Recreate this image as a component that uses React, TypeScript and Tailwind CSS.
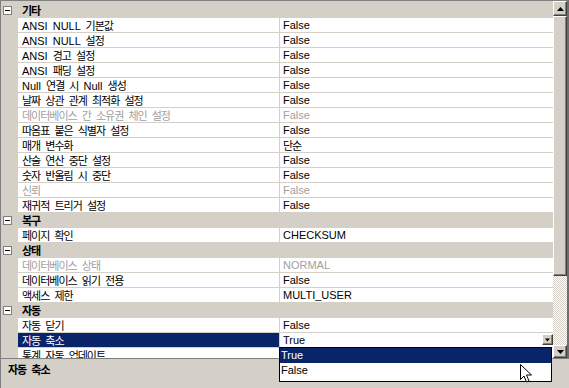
import React from "react";

type Row =
  | { kind: "cat"; label: string }
  | { kind: "item"; name: string; value: string; disabled?: boolean; selected?: boolean };

const rows: Row[] = [
  { kind: "cat", label: "기타" },
  { kind: "item", name: "ANSI NULL 기본값", value: "False" },
  { kind: "item", name: "ANSI NULL 설정", value: "False" },
  { kind: "item", name: "ANSI 경고 설정", value: "False" },
  { kind: "item", name: "ANSI 패딩 설정", value: "False" },
  { kind: "item", name: "Null 연결 시 Null 생성", value: "False" },
  { kind: "item", name: "날짜 상관 관계 최적화 설정", value: "False" },
  { kind: "item", name: "데이터베이스 간 소유권 체인 설정", value: "False", disabled: true },
  { kind: "item", name: "따옴표 붙은 식별자 설정", value: "False" },
  { kind: "item", name: "매개 변수화", value: "단순" },
  { kind: "item", name: "산술 연산 중단 설정", value: "False" },
  { kind: "item", name: "숫자 반올림 시 중단", value: "False" },
  { kind: "item", name: "신뢰", value: "False", disabled: true },
  { kind: "item", name: "재귀적 트리거 설정", value: "False" },
  { kind: "cat", label: "복구" },
  { kind: "item", name: "페이지 확인", value: "CHECKSUM" },
  { kind: "cat", label: "상태" },
  { kind: "item", name: "데이터베이스 상태", value: "NORMAL", disabled: true },
  { kind: "item", name: "데이터베이스 읽기 전용", value: "False" },
  { kind: "item", name: "액세스 제한", value: "MULTI_USER" },
  { kind: "cat", label: "자동" },
  { kind: "item", name: "자동 닫기", value: "False" },
  { kind: "item", name: "자동 축소", value: "True", selected: true },
  { kind: "item", name: "통계 자동 업데이트", value: "True" },
];

function T({ s }: { s: string }) {
  const parts = s.split(/([\uAC00-\uD7A3]+)/).filter((p) => p.length > 0);
  return (
    <span className="whitespace-pre">
      {parts.map((p, i) =>
        /[\uAC00-\uD7A3]/.test(p) ? (
          <span key={i} className="font-['Noto_Sans_CJK_KR',sans-serif] text-[11px] tracking-[-1px]">
            {p}
          </span>
        ) : (
          <span key={i} className="[word-spacing:2px]">{p}</span>
        )
      )}
    </span>
  );
}

function Expander() {
  return (
    <div className="w-[9px] h-[9px] border border-[#7f7f7f] bg-white flex items-center justify-center">
      <div className="w-[5px] h-px bg-black" />
    </div>
  );
}

function ArrowDown({ w = 7 }: { w?: number }) {
  return (
    <svg width={w} height={4} viewBox="0 0 7 4">
      <path d="M0 0 H7 L3.5 4 Z" fill="#000" />
    </svg>
  );
}

function Btn3D({ className, children }: { className?: string; children?: React.ReactNode }) {
  return (
    <div
      className={
        "bg-[#d4d0c8] border-t border-l border-t-white border-l-white border-b border-r border-b-[#404040] border-r-[#404040] shadow-[inset_-1px_-1px_#808080] flex items-center justify-center " +
        (className ?? "")
      }
    >
      {children}
    </div>
  );
}

export default function App() {
  return (
    <div className="relative w-[569px] h-[388px] overflow-hidden bg-[#d4d0c8] flex flex-col font-['Liberation_Sans','Noto_Sans_CJK_KR',sans-serif] text-[11px] text-black">
      {/* Grid area */}
      <div className="h-[358px] flex border-t border-l border-r-2 border-t-[#808080] border-l-[#808080] border-r-[#6e6e6e] overflow-hidden">
        <div className="flex-1 pt-[2px] overflow-hidden">
          {rows.map((r, i) =>
            r.kind === "cat" ? (
              <div key={i} className="h-[15px] flex items-center">
                <div className="w-[17px] flex items-center pl-[2px]">
                  <Expander />
                </div>
                <div className="pl-[4px] font-bold leading-[15px]">
                  <T s={r.label} />
                </div>
              </div>
            ) : (
              <div key={i} className="h-[15px] flex">
                <div className="w-[17px]" />
                <div
                  className={
                    "w-[262px] border-r border-b border-[#d4d0c8] pl-[4px] leading-[14px] overflow-hidden " +
                    (r.selected ? "bg-[#0a246a] text-white" : r.disabled ? "bg-white text-[#a0a0a0]" : "bg-white")
                  }
                >
                  <T s={r.name} />
                </div>
                <div
                  className={
                    "relative flex-1 border-b border-[#d4d0c8] bg-white pl-[3px] leading-[14px] " +
                    (r.disabled ? "text-[#a0a0a0]" : "")
                  }
                >
                  <T s={r.value} />
                  {r.selected && (
                    <Btn3D className="absolute right-0 top-[1px] w-[11px] h-[11px]">
                      <ArrowDown w={5} />
                    </Btn3D>
                  )}
                </div>
              </div>
            )
          )}
        </div>
        {/* Scrollbar */}
        <div className="w-[14px] flex flex-col">
          <Btn3D className="h-[15px]">
            <svg width={7} height={4} viewBox="0 0 7 4">
              <path d="M0 4 H7 L3.5 0 Z" fill="#000" />
            </svg>
          </Btn3D>
          <Btn3D className="h-[260px]" />
          <div className="flex-1 bg-[repeating-conic-gradient(#d4d0c8_0_25%,#ffffff_0_50%)] bg-[length:2px_2px]" />
          <Btn3D className="h-[13px]">
            <ArrowDown />
          </Btn3D>
        </div>
      </div>
      {/* Description panel */}
      <div className="flex-1 border-t border-l border-t-[#808080] border-l-[#808080] pl-[7px] pt-[3px] font-bold leading-[14px]">
        <T s="자동 축소" />
      </div>

      {/* Dropdown list */}
      <div className="absolute left-[279px] top-[347px] w-[273px] h-[35px] bg-white border border-black">
        <div className="h-[15px] bg-[#0a246a] text-white pl-[1px] leading-[15px]">True</div>
        <div className="h-[15px] pl-[1px] leading-[15px]">False</div>
      </div>

      {/* Mouse cursor */}
      <svg className="absolute left-[520px] top-[364px]" width={13} height={20} viewBox="0 0 13 20">
        <path
          d="M0.5 0.5 L0.5 15.5 L4 12 L6.5 18 L9 17 L6.5 11 L11.5 11 Z"
          fill="#fff"
          stroke="#000"
          strokeWidth={1}
          strokeLinejoin="miter"
        />
      </svg>
    </div>
  );
}
